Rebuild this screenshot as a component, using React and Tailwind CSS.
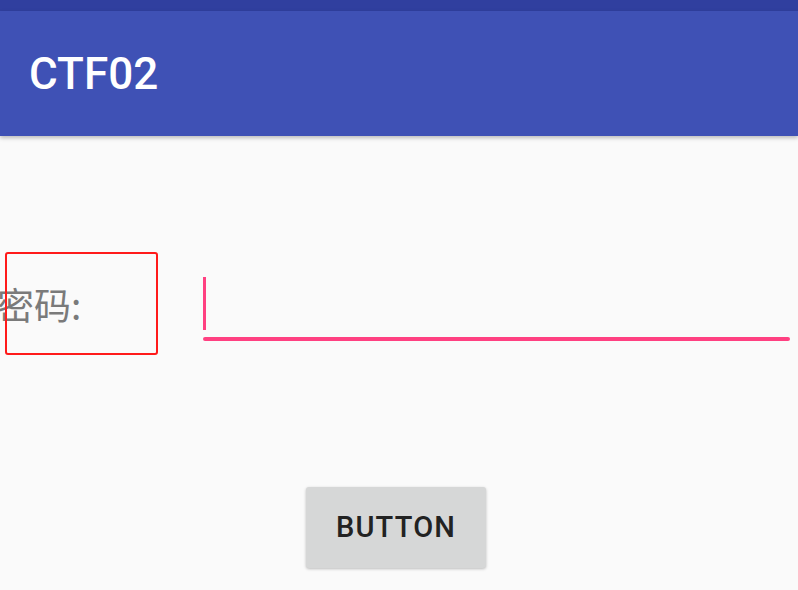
export default function App() {
  return (
    <div className="w-[798px] h-[590px] overflow-hidden bg-[#fafafa] flex flex-col" style={{ fontFamily: 'Roboto, "Noto Sans CJK SC", sans-serif' }}>
      <div className="h-[11px] bg-[#303f9f]" />
      <div className="h-[125px] bg-[#3f51b5] flex items-center pl-[29px] shadow-[0_2px_4px_rgba(0,0,0,0.25)] relative z-10">
        <span className="text-white text-[44px] font-medium leading-none">CTF02</span>
      </div>

      <div className="flex items-start mt-[141px] h-[64px] relative">
        <div className="w-[203px] h-full flex items-center pb-[10px]">
          <span className="-ml-[3px] text-[37px] leading-none text-[#7a7a7a]" style={{ fontFamily: '"Noto Sans CJK SC", sans-serif' }}>密码:</span>
        </div>
        <div className="flex-1 mr-[8px] h-full flex flex-col">
          <div className="h-[53px] w-[3px] bg-[#ff4081]" />
          <div className="mt-[7px] h-[4px] bg-[#ff4081] rounded-full" />
        </div>
        <div className="absolute left-[5px] -top-[25px] w-[153px] h-[103px] border-2 border-[#ff1a1a] rounded-[3px]" />
      </div>

      <div className="mt-[146px] ml-[306px]">
        <button className="w-[180px] h-[81px] bg-[#d6d7d7] rounded-[3px] shadow-[0_1px_3px_rgba(0,0,0,0.25)] text-[29px] font-medium text-[#222] tracking-[1.2px]">
          BUTTON
        </button>
      </div>
    </div>
  );
}
